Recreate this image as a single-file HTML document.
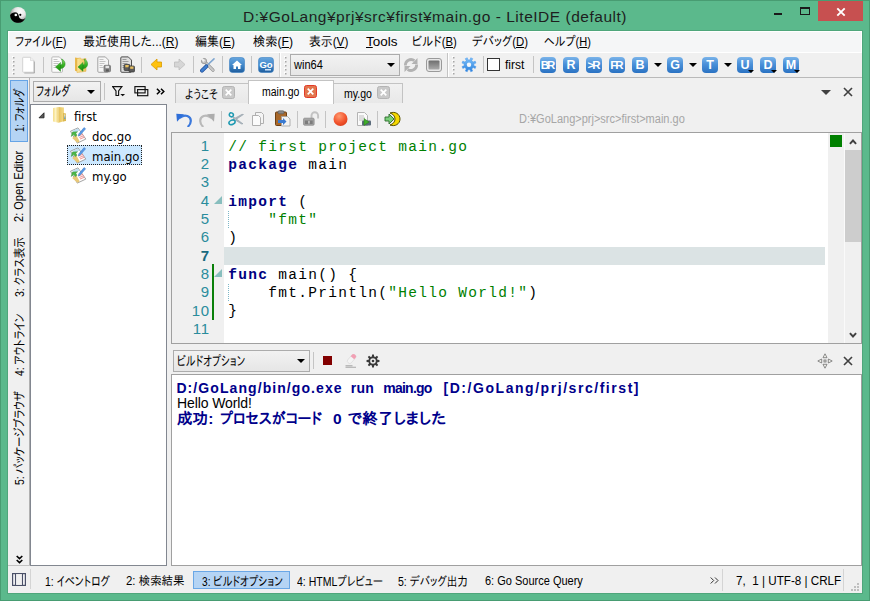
<!DOCTYPE html>
<html lang="ja">
<head>
<meta charset="utf-8">
<title>LiteIDE</title>
<style>
*{box-sizing:border-box;margin:0;padding:0}
html,body{width:870px;height:601px;overflow:hidden;background:#5bb98c}
body{position:relative;font-family:"Liberation Sans","IPAPGothic","IPAGothic","Noto Sans CJK JP",sans-serif;font-size:12px;color:#000}
.a{position:absolute}
.t{position:absolute;white-space:nowrap;line-height:1}
u{text-decoration:underline;text-underline-offset:1px}
#win{left:0;top:0;width:870px;height:601px;background:#5bb98c;border:1px solid #489c72}
#client{left:8px;top:31px;width:854px;height:562px;background:#f0f0f0}
#menubar{left:8px;top:31px;width:854px;height:21px;background:#f5f6f7;border:1px solid #fff;border-bottom:none}
.mi{top:35px;font-size:13px;transform-origin:0 0}
.sep{position:absolute;width:1px;background:#c4c4c4}
.vt{position:absolute;white-space:nowrap;line-height:1;font-size:12px;transform-origin:0 0;transform:rotate(-90deg)}
.combo{position:absolute;border:1px solid #acacac;background:linear-gradient(#f2f2f2,#e6e6e6)}
.box{position:absolute;background:#fff;border:1px solid #828790}
.tab{position:absolute;border:1px solid #c3c3c3;border-bottom:none;background:linear-gradient(#f1f1f1,#e8e8e8)}
.xb{position:absolute;width:13px;height:13px;border-radius:2.500px;background:#c9c9c9;border:1px solid #b4b4b4}
.code{position:absolute;white-space:pre;font-family:"Liberation Mono",monospace;font-size:14.500px;letter-spacing:1.298px;line-height:1;color:#000}
.ln{position:absolute;white-space:pre;font-family:"Liberation Sans",sans-serif;font-size:15px;line-height:1;color:#2a8c9c;text-align:right;width:34px;left:176px;letter-spacing:.8px}
.kw{color:#000080}.cm{color:#008000}.st{color:#008000}
.out{position:absolute;white-space:nowrap;line-height:1;left:176px}
.tr{font-family:'DejaVu Sans','Liberation Sans',sans-serif;font-stretch:condensed;font-size:13px}
.bb{position:absolute;width:18px;height:18px;border-radius:4px;background:linear-gradient(#79b3e9,#4a90d9 45%,#2a72c2);color:#fff;font-weight:bold;font-size:12.500px;text-align:center;line-height:18px;letter-spacing:0}
</style>
</head>
<body>
<div id="win" class="a"></div>
<div class="a" style="left:7px;top:30px;width:856px;height:564px;background:#4fa67b"></div>
<div id="client" class="a"></div>
<div id="menubar" class="a"></div>

<!-- title bar -->
<div class="t" id="title" style="left:243px;top:9px;font-size:15.500px;letter-spacing:.52px;color:#1e1e1e">D:¥GoLang¥prj¥src¥first¥main.go - LiteIDE (default)</div>


<!-- app icon -->
<svg class="a" style="left:9px;top:6px" width="18" height="18" viewBox="0 0 18 18">
<defs><radialGradient id="ig" cx=".62" cy=".3" r=".75"><stop offset="0" stop-color="#fff"/><stop offset=".45" stop-color="#e6e6e6"/><stop offset="1" stop-color="#6a6a6a"/></radialGradient><linearGradient id="ig2" x1="1" y1="0" x2="0" y2="1"><stop offset="0" stop-color="#555"/><stop offset=".5" stop-color="#000"/></linearGradient></defs>
<circle cx="9" cy="9" r="8" fill="url(#ig)"/>
<path d="M1.100 9.500A8 8 0 0 0 16.500 11.800C14 14.300 10.300 13.500 10 10.500C9.800 8 8.300 6 6 6.200C3 6.500 1.300 8 1.100 9.500z" fill="url(#ig2)"/>
<circle cx="6.800" cy="9" r="1.300" fill="#fff"/><circle cx="11.300" cy="8.800" r="1.100" fill="#000"/>
</svg>
<!-- window controls -->
<div class="a" style="left:774px;top:13px;width:8px;height:2px;background:#1a1a1a"></div>
<div class="a" style="left:800px;top:7px;width:10px;height:8px;border:1px solid #1a1a1a;border-top-width:2px"></div>
<div class="a" style="left:818px;top:1px;width:45px;height:20px;background:#c75050"></div>
<svg class="a" style="left:836px;top:6.500px" width="10" height="10" viewBox="0 0 10 10"><path d="M1.300 1.300L8.700 8.700M8.700 1.300L1.300 8.700" stroke="#fff" stroke-width="1.900"/></svg>

<!-- menu -->
<div class="t mi" style="left:15px;transform:scaleX(0.871)">ファイル(<u>F</u>)</div>
<div class="t mi" style="left:83px;transform:scaleX(0.924)">最近使用した...(<u>R</u>)</div>
<div class="t mi" style="left:195px;transform:scaleX(0.922)">編集(<u>E</u>)</div>
<div class="t mi" style="left:252.5px;transform:scaleX(0.939)">検索(<u>F</u>)</div>
<div class="t mi" style="left:309px;transform:scaleX(0.910)">表示(<u>V</u>)</div>
<div class="t mi" style="left:366px;transform:scaleX(1.036)"><u>T</u>ools</div>
<div class="t mi" style="left:412.4px;transform:scaleX(0.870)">ビルド(<u>B</u>)</div>
<div class="t mi" style="left:472px;transform:scaleX(0.874)">デバッグ(<u>D</u>)</div>
<div class="t mi" style="left:543.8px;transform:scaleX(0.850)">ヘルプ(<u>H</u>)</div>
<!-- main toolbar -->
<div class="a" style="left:8px;top:52px;width:854px;height:1px;background:#fff"></div>
<div class="a" style="left:8px;top:77px;width:854px;height:1px;background:#b9b9b9"></div>
<svg class="a" style="left:11.500px;top:56px" width="3" height="20" viewBox="0 0 3 20"><rect x="0" y="0" width="1.500" height="1.500" fill="#fff"/><rect x="1" y="1" width="1.500" height="1.500" fill="#a6a6a6"/><rect x="0" y="4" width="1.500" height="1.500" fill="#fff"/><rect x="1" y="5" width="1.500" height="1.500" fill="#a6a6a6"/><rect x="0" y="8" width="1.500" height="1.500" fill="#fff"/><rect x="1" y="9" width="1.500" height="1.500" fill="#a6a6a6"/><rect x="0" y="12" width="1.500" height="1.500" fill="#fff"/><rect x="1" y="13" width="1.500" height="1.500" fill="#a6a6a6"/><rect x="0" y="16" width="1.500" height="1.500" fill="#fff"/><rect x="1" y="17" width="1.500" height="1.500" fill="#a6a6a6"/></svg>
<svg class="a" width="0" height="0" style="left:0;top:0"><defs><linearGradient id="ga" x1="0" y1="0" x2="0" y2="1"><stop offset="0" stop-color="#8fe070"/><stop offset=".5" stop-color="#35b020"/><stop offset="1" stop-color="#1d8a12"/></linearGradient><linearGradient id="fo" x1="0" y1="0" x2="1" y2="0"><stop offset="0" stop-color="#fbe597"/><stop offset="1" stop-color="#efc35a"/></linearGradient></defs></svg><svg class="a" style="left:20.500px;top:56px" width="17" height="18" viewBox="0 0 17 18"><path d="M3.300 2.200h6.800l3.900 3.900v10.500a.8 .8 0 0 1-.8 .8h-9.900z" fill="#a4a4a4" opacity=".9"/><path d="M2.300 1.300h7.200l3.300 3.300v11a.6 .6 0 0 1-.6 .6h-9.900a.6 .6 0 0 1-.6-.6v-13.700a.6 .6 0 0 1 .6-.6z" fill="#fff" stroke="#cacaca" stroke-width=".8"/><path d="M9.500 1.300v3.300h3.300" fill="#f0f0f0" stroke="#d0d0d0" stroke-width=".6"/></svg>
<div class="sep" style="left:43px;top:57px;height:16px"></div>
<svg class="a" style="left:50px;top:56px" width="17" height="17" viewBox="0 0 17 17"><path d="M2.800 .900h6.500l3.200 3.200v11.200a1 1 0 0 1-1 1h-8.700a1 1 0 0 1-1-1v-13.400a1 1 0 0 1 1-1z" fill="#fcfcfc" stroke="#b4b4b4" stroke-width=".9"/><path d="M3.500 3.500h4M3.500 5.500h6M3.500 7.500h5M3.500 9.500h3M3.500 11.500h4" stroke="#c4c4c4" stroke-width="1"/><path d="M10.500 9C12.500 9 13 6 11.500 3C15 4 16.500 9 13.500 11.500C12.500 12.300 11.500 12.600 10.500 12.600zM10.500 6.500L5.500 11L10.500 15.300z" fill="url(#ga)" stroke="#1f8a18" stroke-width=".5"/></svg>
<svg class="a" style="left:74px;top:56px" width="17" height="17" viewBox="0 0 17 17"><path d="M1 1.500l4.500 .8v14l-4.500-1.500z" fill="#e9b94c"/><path d="M3 2.500l3.500-.6 1 1.300 4.500-.7v12.800l-9 1.300z" fill="url(#fo)" stroke="#e0ae45" stroke-width=".5"/><g transform="translate(-1.500 0)"><path d="M10.500 9C12.500 9 13 6 11.500 3C15 4 16.500 9 13.500 11.500C12.500 12.300 11.500 12.600 10.500 12.600zM10.500 6.500L5.500 11L10.500 15.300z" fill="url(#ga)" stroke="#1f8a18" stroke-width=".5"/></g></svg>
<svg class="a" style="left:96px;top:56px" width="17" height="17" viewBox="0 0 17 17"><path d="M2.800 .900h6.500l3.200 3.200v11.200a1 1 0 0 1-1 1h-8.700a1 1 0 0 1-1-1v-13.400a1 1 0 0 1 1-1z" fill="#f6f6f6" stroke="#9a9a9a" stroke-width=".9"/><path d="M3.500 3.500h4M3.500 5.500h6M3.500 7.500h5M3.500 9.500h3M3.500 11.500h4" stroke="#c4c4c4" stroke-width="1"/><rect x="8" y="9.300" width="6.500" height="6.500" rx="1" fill="#8c8c8c" stroke="#6a6a6a" stroke-width=".7"/><rect x="9.500" y="9.800" width="3.500" height="2.300" fill="#e4e4e4"/><rect x="9.800" y="13.300" width="3" height="2.200" fill="#5a5a5a"/></svg>
<svg class="a" style="left:119px;top:56px" width="17" height="17" viewBox="0 0 17 17"><path d="M2.800 .900h6.500l3.200 3.200v11.200a1 1 0 0 1-1 1h-8.700a1 1 0 0 1-1-1v-13.400a1 1 0 0 1 1-1z" fill="#dedede" stroke="#3c3c3c" stroke-width=".9"/><path d="M3.500 3.500h4M3.500 5.500h6M3.500 7.500h5M3.500 9.500h3M3.500 11.500h4" stroke="#9a9a9a" stroke-width="1"/><rect x="5" y="8.500" width="6" height="6" rx="1" fill="#5a5a5a" stroke="#333" stroke-width=".7"/><rect x="6.300" y="9" width="3.400" height="2.300" fill="#e8c060"/><rect x="10" y="10" width="5.500" height="6" rx="1" fill="#5a5a5a" stroke="#333" stroke-width=".7"/><rect x="11.200" y="10.500" width="3.200" height="2.300" fill="#e8c060"/></svg>
<div class="sep" style="left:141px;top:57px;height:16px"></div>
<svg class="a" style="left:150px;top:58px" width="13" height="13" viewBox="0 0 13 13"><path d="M7 1v3h4.500v5h-4.500v3l-6-5.500z" fill="#ffc20e" stroke="#d89a00" stroke-width=".8"/></svg>
<svg class="a" style="left:173px;top:58px" width="13" height="13" viewBox="0 0 13 13"><path d="M6 1v3h-4.500v5h4.500v3l6-5.500z" fill="#d6d6d6" stroke="#bdbdbd" stroke-width=".8"/></svg>
<div class="sep" style="left:193px;top:56px;height:17px"></div>
<svg class="a" style="left:200px;top:57px" width="16" height="16" viewBox="0 0 16 16"><path d="M5 5L13 13.200" stroke="#8e8e8e" stroke-width="3.200" stroke-linecap="round"/><path d="M5 5L13 13.200" stroke="#c9c9c9" stroke-width="2" stroke-linecap="round"/><circle cx="4" cy="4" r="2.700" fill="#c4c4c4" stroke="#8e8e8e" stroke-width=".7"/><path d="M1 1l3.300 3.300" stroke="#f0f0f0" stroke-width="2"/><path d="M7 8.500L14 1.800" stroke="#7fa6d0" stroke-width="1.600" stroke-linecap="round"/><path d="M2 13.700L6.300 9.300" stroke="#1f4f9a" stroke-width="3.800" stroke-linecap="round"/><path d="M2 13.700L6.300 9.300" stroke="#3f7fd0" stroke-width="2.400" stroke-linecap="round"/></svg>
<div class="sep" style="left:222px;top:56px;height:17px"></div>
<svg class="a" style="left:229px;top:57px" width="16" height="16" viewBox="0 0 16 16"><defs><linearGradient id="bg1" x1="0" y1="0" x2="0" y2="1"><stop offset="0" stop-color="#66a5de"/><stop offset=".55" stop-color="#3f86c9"/><stop offset="1" stop-color="#1d5c9c"/></linearGradient></defs><rect x=".5" y=".5" width="15" height="15" rx="3" fill="url(#bg1)" stroke="#3b7fc2" stroke-width=".6"/><path d="M8 3.500l-5 4.500h1.500v4h2.500v-2.500h2v2.500h2.500v-4h1.500z" fill="#fff"/></svg>
<div class="sep" style="left:251px;top:56px;height:17px"></div>
<svg class="a" style="left:258px;top:57px" width="16" height="16" viewBox="0 0 16 16"><rect x=".5" y=".5" width="15" height="15" rx="3" fill="url(#bg1)" stroke="#3b7fc2" stroke-width=".6"/><text x="8" y="10.500" font-family="Liberation Sans,sans-serif" font-weight="bold" font-size="9.500" fill="#fff" text-anchor="middle">Go</text><rect x="7" y="12" width="6" height="1.500" fill="#cfe2f7"/></svg>
<div class="a" style="left:279px;top:53px;width:2px;height:24px;background:linear-gradient(90deg,#d2d2d2 50%,#fff 50%)"></div>
<svg class="a" style="left:284px;top:56px" width="3" height="20" viewBox="0 0 3 20"><rect x="0" y="0" width="1.500" height="1.500" fill="#fff"/><rect x="1" y="1" width="1.500" height="1.500" fill="#a6a6a6"/><rect x="0" y="4" width="1.500" height="1.500" fill="#fff"/><rect x="1" y="5" width="1.500" height="1.500" fill="#a6a6a6"/><rect x="0" y="8" width="1.500" height="1.500" fill="#fff"/><rect x="1" y="9" width="1.500" height="1.500" fill="#a6a6a6"/><rect x="0" y="12" width="1.500" height="1.500" fill="#fff"/><rect x="1" y="13" width="1.500" height="1.500" fill="#a6a6a6"/><rect x="0" y="16" width="1.500" height="1.500" fill="#fff"/><rect x="1" y="17" width="1.500" height="1.500" fill="#a6a6a6"/></svg>
<div class="combo" style="left:290px;top:54px;width:110px;height:22px"></div>
<div class="t" style="transform:scaleX(.92);transform-origin:0 0;left:294px;top:59px;font-size:12px">win64</div>
<div class="a" style="left:387px;top:63px;border:4px solid transparent;border-top:4px solid #000;border-bottom:none"></div>
<svg class="a" style="left:403px;top:57px" width="16" height="16" viewBox="0 0 16 16"><g fill="none" stroke="#b2b2b2" stroke-width="2.800"><path d="M2.400 8.500a5.600 5.600 0 0 1 9-4.800"/><path d="M13.600 7.500a5.600 5.600 0 0 1-9 4.800"/></g><path d="M14.500 1v6h-6zM1.500 15v-6h6z" fill="#b2b2b2"/></svg>
<svg class="a" style="left:426px;top:57px" width="16" height="16" viewBox="0 0 16 16"><defs><linearGradient id="gg" x1="0" y1="0" x2="0" y2="1"><stop offset="0" stop-color="#6e6e6e"/><stop offset="1" stop-color="#aaaaaa"/></linearGradient></defs><rect x=".5" y="1.500" width="15" height="13" rx="2.500" fill="#e8e8e8" stroke="#9a9a9a"/><rect x="2.500" y="3.500" width="11" height="9" rx="1" fill="url(#gg)"/></svg>
<div class="a" style="left:447px;top:53px;width:2px;height:24px;background:linear-gradient(90deg,#c4c4c4 50%,#fff 50%)"></div>
<svg class="a" style="left:452px;top:56px" width="3" height="20" viewBox="0 0 3 20"><rect x="0" y="0" width="1.500" height="1.500" fill="#fff"/><rect x="1" y="1" width="1.500" height="1.500" fill="#a6a6a6"/><rect x="0" y="4" width="1.500" height="1.500" fill="#fff"/><rect x="1" y="5" width="1.500" height="1.500" fill="#a6a6a6"/><rect x="0" y="8" width="1.500" height="1.500" fill="#fff"/><rect x="1" y="9" width="1.500" height="1.500" fill="#a6a6a6"/><rect x="0" y="12" width="1.500" height="1.500" fill="#fff"/><rect x="1" y="13" width="1.500" height="1.500" fill="#a6a6a6"/><rect x="0" y="16" width="1.500" height="1.500" fill="#fff"/><rect x="1" y="17" width="1.500" height="1.500" fill="#a6a6a6"/></svg>
<svg class="a" style="left:461px;top:57px" width="16" height="16" viewBox="0 0 16 16"><defs><linearGradient id="gr" x1="0" y1="0" x2="0" y2="1"><stop offset="0" stop-color="#7cc0fa"/><stop offset="1" stop-color="#2b80dc"/></linearGradient></defs><path d="M14.99 9.53L14.17 11.52L12.17 10.56L10.76 11.97L11.72 13.97L9.73 14.79L8.99 12.70L7.01 12.70L6.27 14.79L4.28 13.97L5.24 11.97L3.83 10.56L1.83 11.52L1.01 9.53L3.10 8.79L3.10 6.81L1.01 6.07L1.83 4.08L3.83 5.04L5.24 3.63L4.28 1.63L6.27 0.81L7.01 2.90L8.99 2.90L9.73 0.81L11.72 1.63L10.76 3.63L12.17 5.04L14.17 4.08L14.99 6.07L12.90 6.81L12.90 8.79z" fill="url(#gr)" stroke="#4a98ea" stroke-width=".5" stroke-linejoin="round"/><circle cx="8" cy="7.800" r="2.200" fill="#f4f8fc"/></svg>
<div class="sep" style="left:483px;top:56px;height:17px"></div>
<div class="a" style="left:487px;top:58px;width:13px;height:13px;background:#fff;border:1px solid #333"></div>
<div class="t" style="left:505px;top:59px;font-size:12px">first</div>
<div class="sep" style="left:533px;top:56px;height:17px"></div>
<div class="bb" style="left:540px;top:57px;width:16px;height:16px;line-height:16px;letter-spacing:-2px;font-size:11.500px;text-indent:-2px">BR</div>
<div class="bb" style="left:563px;top:57px;width:16px;height:16px;line-height:16px;letter-spacing:0">R</div>
<div class="bb" style="left:586px;top:57px;width:16px;height:16px;line-height:16px;letter-spacing:-2px;font-size:11.500px;text-indent:-2px">&gt;R</div>
<div class="bb" style="left:609px;top:57px;width:16px;height:16px;line-height:16px;letter-spacing:-2px;font-size:11.500px;text-indent:-2px">FR</div>
<div class="bb" style="left:632px;top:57px;width:16px;height:16px;line-height:16px;letter-spacing:0">B</div>
<div class="a" style="left:654px;top:63px;border:4px solid transparent;border-top:4px solid #000;border-bottom:none"></div>
<div class="bb" style="left:667px;top:57px;width:16px;height:16px;line-height:16px;letter-spacing:0">G</div>
<div class="a" style="left:689px;top:63px;border:4px solid transparent;border-top:4px solid #000;border-bottom:none"></div>
<div class="bb" style="left:702px;top:57px;width:16px;height:16px;line-height:16px;letter-spacing:0">T</div>
<div class="a" style="left:724px;top:63px;border:4px solid transparent;border-top:4px solid #000;border-bottom:none"></div>
<div class="bb" style="left:737px;top:57px;width:16px;height:16px;line-height:16px;letter-spacing:0">U</div>
<div class="a" style="left:748px;top:70px;border:3px solid transparent;border-top:3px solid #000;border-bottom:none"></div>
<div class="bb" style="left:760px;top:57px;width:16px;height:16px;line-height:16px;letter-spacing:0">D</div>
<div class="a" style="left:771px;top:70px;border:3px solid transparent;border-top:3px solid #000;border-bottom:none"></div>
<div class="bb" style="left:783px;top:57px;width:16px;height:16px;line-height:16px;letter-spacing:0">M</div>
<div class="a" style="left:794px;top:70px;border:3px solid transparent;border-top:3px solid #000;border-bottom:none"></div>
<!-- left side bar -->
<div class="a" style="left:10px;top:80px;width:18px;height:62px;background:#b5d4f4;border:1px solid #66a4e6"></div>
<div class="a" style="left:29px;top:78px;width:1px;height:488px;background:#b0b0b0"></div>
<div class="vt" id="v1" style="font-size:13px;left:12.500px;top:132px;transform:rotate(-90deg) scaleX(0.738)">1: フォルダ</div>
<div class="vt" id="v2" style="left:13px;top:222px;transform:rotate(-90deg) scaleX(0.92)">2: Open Editor</div>
<div class="vt" id="v3" style="font-size:13px;left:12.500px;top:297px;transform:rotate(-90deg) scaleX(0.812)">3: クラス表示</div>
<div class="vt" id="v4" style="font-size:13px;left:12.500px;top:376px;transform:rotate(-90deg) scaleX(0.803)">4: アウトライン</div>
<div class="vt" id="v5" style="font-size:13px;left:12.500px;top:485px;transform:rotate(-90deg) scaleX(0.799)">5: パッケージブラウザ</div>
<svg class="a" style="left:16px;top:554.500px" width="7" height="9" viewBox="0 0 7 9"><path d="M.7 1l2.800 2.600 2.800-2.600M.7 5l2.800 2.600 2.800-2.600" fill="none" stroke="#000" stroke-width="1.600"/></svg>
<div class="a" style="left:8px;top:565px;width:22px;height:1px;background:#c2c2c2"></div>
<!-- folder panel -->
<div class="combo" style="left:33px;top:81px;width:68px;height:21px"></div>
<div class="t" id="fcombo" style="transform:scaleX(0.720);transform-origin:0 0;left:36px;top:84px;font-size:14px">フォルダ</div>
<div class="a" style="left:87px;top:90px;border:4px solid transparent;border-top:4px solid #000;border-bottom:none"></div>
<div class="sep" style="left:104px;top:83px;height:17px"></div>
<svg class="a" style="left:112px;top:86px" width="14" height="11" viewBox="0 0 14 11"><path d="M.6 .6h9.300l-3.300 4.400v4.500h-2.600v-4.500z" fill="none" stroke="#111" stroke-width="1.150"/><path d="M8.300 7.900h4.800l-2.400 2.300z" fill="#111"/></svg>
<svg class="a" style="left:134px;top:86px" width="15" height="11" viewBox="0 0 15 11"><rect x=".9" y=".6" width="10.200" height="6.300" fill="none" stroke="#111" stroke-width="1.150"/><rect x="3.600" y="3.600" width="10.200" height="6.100" fill="none" stroke="#111" stroke-width="1.150"/></svg>
<svg class="a" style="left:155.500px;top:88px" width="9" height="7" viewBox="0 0 9 7"><path d="M.9 .8l2.800 2.700-2.800 2.700M5 .8l2.800 2.700-2.800 2.700" fill="none" stroke="#000" stroke-width="1.500"/></svg>
<div class="box" style="left:30px;top:104px;width:137px;height:462px"></div>
<svg class="a" style="left:38px;top:112px" width="7" height="7" viewBox="0 0 7 7"><path d="M6 .8v5h-5z" fill="#595959" stroke="#262626" stroke-width=".9"/></svg>
<svg class="a" style="left:53px;top:107px" width="14" height="16" viewBox="0 0 14 16"><defs><linearGradient id="fg" x1="0" y1="0" x2="1" y2="0"><stop offset="0" stop-color="#f3d97e"/><stop offset=".45" stop-color="#fdf3c4"/><stop offset="1" stop-color="#f0d274"/></linearGradient><linearGradient id="fg2" x1="0" y1="0" x2="1" y2="0"><stop offset="0" stop-color="#e6c25c"/><stop offset="1" stop-color="#f4dc8a"/></linearGradient><linearGradient id="fg3" x1="0" y1="0" x2="0" y2="1"><stop offset="0" stop-color="#fff"/><stop offset="1" stop-color="#2f8fe0"/></linearGradient></defs><path d="M.1 1l5.400-.9v15.600l-5.400-1.200z" fill="url(#fg)"/><path d="M5.500 .1l5.500 .4v13.700l-5.500 1.500z" fill="url(#fg2)"/><path d="M10 6l3 .5v7.500l-3 .6z" fill="#dcb851"/><rect x="11.300" y="7.500" width="1" height="4.500" fill="url(#fg3)"/></svg>
<svg class="a" style="left:70px;top:126.5px" width="17" height="17" viewBox="0 0 17 17"><path d="M.5 4.200l7.500-3.300 7.800 11.200-8.500 4z" fill="#fdfdfd" stroke="#8e8e8e" stroke-width=".8"/><path d="M2.500 3.800l5.500-2.300 1.500 2-5.800 2.500z" fill="#bfe0f5"/><path d="M8.500 9l4.500-1.800M9.300 10.500l4.500-1.800M10 12l4.500-1.800" stroke="#f08a8a" stroke-width=".9"/><path d="M2.200 11l4-3 3.500 6.500-2.400 1.200z" fill="#e8c878"/><path d="M1.200 9.500l1.200-4.500 5.200-.3-1.800 1.600 1.200 2-2 1.300-1.200-2z" fill="#4cb648" stroke="#2f8f2f" stroke-width=".4"/><path d="M14 .6l1.600 1.200-5.500 6.400-1.800.8 .4-1.900z" fill="#5a9be6" stroke="#3a78c8" stroke-width=".5"/></svg>
<div class="a" style="left:67px;top:145px;width:75px;height:20px;background:#cce8ff;border:1px dotted #222"></div>
<svg class="a" style="left:70px;top:146.5px" width="17" height="17" viewBox="0 0 17 17"><path d="M.5 4.200l7.500-3.300 7.800 11.200-8.500 4z" fill="#fdfdfd" stroke="#8e8e8e" stroke-width=".8"/><path d="M2.500 3.800l5.500-2.300 1.500 2-5.800 2.500z" fill="#bfe0f5"/><path d="M8.500 9l4.500-1.800M9.300 10.500l4.500-1.800M10 12l4.500-1.800" stroke="#f08a8a" stroke-width=".9"/><path d="M2.200 11l4-3 3.500 6.500-2.400 1.200z" fill="#e8c878"/><path d="M1.200 9.500l1.200-4.500 5.200-.3-1.800 1.600 1.200 2-2 1.300-1.200-2z" fill="#4cb648" stroke="#2f8f2f" stroke-width=".4"/><path d="M14 .6l1.600 1.200-5.500 6.400-1.800.8 .4-1.900z" fill="#5a9be6" stroke="#3a78c8" stroke-width=".5"/></svg>
<svg class="a" style="left:70px;top:166.5px" width="17" height="17" viewBox="0 0 17 17"><path d="M.5 4.200l7.500-3.300 7.800 11.200-8.500 4z" fill="#fdfdfd" stroke="#8e8e8e" stroke-width=".8"/><path d="M2.500 3.800l5.500-2.300 1.500 2-5.800 2.500z" fill="#bfe0f5"/><path d="M8.500 9l4.500-1.800M9.300 10.500l4.500-1.800M10 12l4.500-1.800" stroke="#f08a8a" stroke-width=".9"/><path d="M2.200 11l4-3 3.500 6.500-2.400 1.200z" fill="#e8c878"/><path d="M1.200 9.500l1.200-4.500 5.200-.3-1.800 1.600 1.200 2-2 1.300-1.200-2z" fill="#4cb648" stroke="#2f8f2f" stroke-width=".4"/><path d="M14 .6l1.600 1.200-5.500 6.400-1.800.8 .4-1.900z" fill="#5a9be6" stroke="#3a78c8" stroke-width=".5"/></svg>
<div class="t tr" style="left:74px;top:109.500px;">first</div>
<div class="t tr" style="left:92px;top:129.500px;">doc.go</div>
<div class="t tr" style="left:92px;top:149.500px;">main.go</div>
<div class="t tr" style="left:92px;top:169.500px;">my.go</div>
<!-- editor tabs -->

<div class="tab" style="left:175px;top:83px;width:74px;height:20px"></div>
<div class="tab" style="left:333px;top:83px;width:70px;height:20px"></div>
<div class="tab" style="left:248px;top:80px;width:86px;height:24px;background:#fff"></div>
<div class="t tb" style="transform:scaleX(0.778);transform-origin:0 0;left:185px;top:87.5px;font-size:13px">ようこそ</div>
<div class="t tb" style="transform:scaleX(0.875);transform-origin:0 0;left:262px;top:86px;font-size:12px">main.go</div>
<div class="t tb" style="transform:scaleX(0.880);transform-origin:0 0;left:344px;top:88px;font-size:12px">my.go</div>
<div class="xb" style="left:222px;top:86px;background:#c9c9c9"></div><svg class="a" style="left:225px;top:89px" width="7" height="7" viewBox="0 0 7 7"><path d="M.7 .7l5.600 5.600M6.300 .7l-5.600 5.600" stroke="#fff" stroke-width="1.700"/></svg>
<div class="xb" style="left:304px;top:85px;background:#e2764e;border:1px solid #e23a28"></div><svg class="a" style="left:307px;top:88px" width="7" height="7" viewBox="0 0 7 7"><path d="M.7 .7l5.600 5.600M6.300 .7l-5.600 5.600" stroke="#fff" stroke-width="1.700"/></svg>
<div class="xb" style="left:377px;top:86px;background:#c9c9c9"></div><svg class="a" style="left:380px;top:89px" width="7" height="7" viewBox="0 0 7 7"><path d="M.7 .7l5.600 5.600M6.300 .7l-5.600 5.600" stroke="#fff" stroke-width="1.700"/></svg>
<div class="a" style="left:821px;top:90px;border:5px solid transparent;border-top:5px solid #404040;border-bottom:none"></div>
<svg class="a" style="left:843px;top:87px" width="10" height="10" viewBox="0 0 10 10"><path d="M1 1l8 8M9 1l-8 8" stroke="#404040" stroke-width="1.650"/></svg>
<!-- editor toolbar -->
<svg class="a" style="left:176px;top:111.500px" width="17" height="15" viewBox="0 0 17 15"><path d="M4.500 5.500C9 1.500 15 4.500 14.800 9C14.700 11.500 13.800 13 12.300 14.300" fill="none" stroke="#3a78dc" stroke-width="2.200" stroke-linecap="round"/><path d="M.3 1.800L8 2.200L1 9.800z" fill="#2f6fd8"/></svg>
<svg class="a" style="left:198px;top:111.500px" width="17" height="15" viewBox="0 0 17 15"><path d="M12.500 5.500C8 1.500 2 4.500 2.200 9C2.300 11.500 3.200 13 4.700 14.300" fill="none" stroke="#b9b9b9" stroke-width="2.200" stroke-linecap="round"/><path d="M16.700 1.800L9 2.200L16 9.800z" fill="#adadad"/></svg>
<div class="sep" style="left:221px;top:111px;height:17px"></div>
<svg class="a" style="left:228px;top:111px" width="16" height="16" viewBox="0 0 16 16"><path d="M5 5.500L15 12.800l-1.500 .2L5.500 8zM6.500 9.500L15.500 3.500l-1.600-.2L5.500 8z" fill="#aeb8c0" stroke="#8896a0" stroke-width=".5"/><ellipse cx="3.300" cy="3.800" rx="2.100" ry="1.900" fill="none" stroke="#1f9ab2" stroke-width="1.500" transform="rotate(30 3.300 3.800)"/><ellipse cx="4" cy="11.300" rx="3.200" ry="2.100" fill="none" stroke="#1f9ab2" stroke-width="1.600" transform="rotate(-25 4 11.300)"/></svg>
<svg class="a" style="left:251px;top:111px" width="16" height="16" viewBox="0 0 16 16"><path d="M4.500 1.500h6l2 2v9h-8z" fill="#f4f4f4" stroke="#b0b0b0"/><path d="M1.500 4.500h6l2 2v8h-8z" fill="#fbfbfb" stroke="#b0b0b0"/></svg>
<svg class="a" style="left:274px;top:110px" width="17" height="17" viewBox="0 0 17 17"><rect x="1.500" y="2" width="11" height="13.500" rx="1" fill="#a8682a" stroke="#6d3f12"/><rect x="4" y=".8" width="6" height="3" rx="1" fill="#888" stroke="#555" stroke-width=".6"/><path d="M7.500 6.500h6l2.500 2.500v7h-8.500z" fill="#f2f2f2" stroke="#a0a0a0" stroke-width=".8"/><path d="M4 10h5v-2l3.500 3.500-3.500 3.500v-2h-5z" fill="#3a7ad0"/></svg>
<div class="sep" style="left:297px;top:111px;height:17px"></div>
<svg class="a" style="left:303px;top:111px" width="17" height="16" viewBox="0 0 17 16"><path d="M8.500 8v-3.500a3.300 3.300 0 0 1 6.600 0v3" fill="none" stroke="#c2c2c2" stroke-width="1.900"/><rect x=".6" y="7.200" width="10.500" height="7" rx="1" fill="#a4a4a4" stroke="#8a8a8a" stroke-width=".8"/><rect x="2" y="9.500" width="7.700" height="3.500" fill="#7c7c7c"/><rect x="5.300" y="9.800" width="1.300" height="2.800" fill="#d8d8d8"/></svg>
<div class="sep" style="left:325px;top:111px;height:17px"></div>
<svg class="a" style="left:333px;top:111px" width="16" height="16" viewBox="0 0 16 16"><defs><radialGradient id="rg" cx=".4" cy=".3" r=".8"><stop offset="0" stop-color="#ff9a70"/><stop offset=".6" stop-color="#f2542d"/><stop offset="1" stop-color="#d63a18"/></radialGradient></defs><circle cx="7.500" cy="8" r="7" fill="url(#rg)"/></svg>
<svg class="a" style="left:356px;top:111px" width="16" height="16" viewBox="0 0 16 16"><path d="M1.500 1.500h7l3 3v10h-10z" fill="#fafafa" stroke="#b4b4b4"/><path d="M3 5h5M3 7h6M3 9h4" stroke="#c0c0c0"/><rect x="6" y="9.500" width="9" height="5" rx="1" fill="#5a6a7a"/><path d="M8 7.500l5 3.500-5 3.500z" fill="#3fae2a" stroke="#2a7a1a" stroke-width=".5"/></svg>
<div class="sep" style="left:377px;top:111px;height:17px"></div>
<svg class="a" style="left:384px;top:111px" width="17" height="16" viewBox="0 0 17 16"><path d="M6 2c5-2 10 1 10 6s-5 8-10 6c3-1 5-3 5-6s-2-5-5-6z" fill="#f5d800" stroke="#5a5200" stroke-width="1"/><path d="M1 6h4v-3l5 5-5 5v-3h-4z" fill="#7ad07a" stroke="#2a6a2a" stroke-width=".9"/></svg>
<div class="t" id="path" style="left:519px;top:113px;font-size:12px;color:#a6a6a6;transform:scaleX(.917);transform-origin:0 0">D:¥GoLang&gt;prj&gt;src&gt;first&gt;main.go</div>
<!-- editor -->
<div class="box" style="left:171px;top:132px;width:691px;height:212px;border-color:#a0a0a0"></div>
<div class="a" style="left:172px;top:133px;width:52px;height:210px;background:#f0f0f0"></div>
<div class="a" style="left:224px;top:247px;width:601px;height:18px;background:#dbe3e4"></div>
<div class="a" style="left:828px;top:133px;width:17px;height:210px;background:#f0f0f0"></div>
<div class="a" style="left:830px;top:135px;width:12px;height:12px;background:#008000"></div>
<div class="a" style="left:844px;top:133px;width:1px;height:210px;background:#fafafa"></div>
<div class="a" style="left:845px;top:133px;width:16px;height:210px;background:#f0f0f0"></div>
<div class="a" style="left:845px;top:150px;width:16px;height:92px;background:#cdcdcd"></div>
<svg class="a" style="left:848.700px;top:138px" width="8" height="8" viewBox="0 0 8 8"><path d="M.9 5.800L4 2.500L7.100 5.800" fill="none" stroke="#404040" stroke-width="1.900"/></svg>
<svg class="a" style="left:848.700px;top:331px" width="8" height="8" viewBox="0 0 8 8"><path d="M.9 2.200L4 5.500L7.100 2.200" fill="none" stroke="#404040" stroke-width="1.900"/></svg>
<div class="a" style="left:212px;top:264px;width:2px;height:56px;background:#0a800a"></div>
<svg class="a" style="left:214px;top:196px" width="8" height="8" viewBox="0 0 8 8"><path d="M8 0v8h-8z" fill="#88bebe"/></svg>
<svg class="a" style="left:214px;top:269px" width="8" height="8" viewBox="0 0 8 8"><path d="M8 0v8h-8z" fill="#88bebe"/></svg>
<div class="a" style="left:228px;top:211px;width:1px;height:17px;background-image:repeating-linear-gradient(#7fb8c8 0 1px,transparent 1px 2px)"></div>
<div class="a" style="left:228px;top:284px;width:1px;height:17px;background-image:repeating-linear-gradient(#7fb8c8 0 1px,transparent 1px 2px)"></div>
<div class="ln" style="top:137.8px">1</div><div class="code" style="left:228.200px;top:139.6px"><span class="cm">// first project main.go</span></div>
<div class="ln" style="top:156.1px">2</div><div class="code" style="left:228.200px;top:157.9px"><b class="kw">package</b> main</div>
<div class="ln" style="top:174.4px">3</div>
<div class="ln" style="top:192.7px">4</div><div class="code" style="left:228.200px;top:194.5px"><b class="kw">import</b> (</div>
<div class="ln" style="top:211.0px">5</div><div class="code" style="left:228.200px;top:212.8px">    <span class="st">"fmt"</span></div>
<div class="ln" style="top:229.3px">6</div><div class="code" style="left:228.200px;top:231.1px">)</div>
<div class="ln" style="top:247.6px;color:#1a6a80;font-weight:bold">7</div>
<div class="ln" style="top:265.9px">8</div><div class="code" style="left:228.200px;top:267.7px"><b class="kw">func</b> main() {</div>
<div class="ln" style="top:284.2px">9</div><div class="code" style="left:228.200px;top:286.0px">    fmt.Println(<span class="st">"Hello World!"</span>)</div>
<div class="ln" style="top:302.5px">10</div><div class="code" style="left:228.200px;top:304.3px">}</div>
<div class="ln" style="top:320.8px">11</div>
<!-- bottom panel -->
<div class="combo" style="left:173px;top:350px;width:137px;height:22px"></div>
<div class="t" id="bcombo" style="left:177px;top:354px;font-size:14px;transform:scaleX(0.711);transform-origin:0 0">ビルドオプション</div>
<div class="a" style="left:297px;top:359px;border:4px solid transparent;border-top:4px solid #000;border-bottom:none"></div>
<div class="sep" style="left:313px;top:352px;height:17px"></div>
<div class="a" style="left:323px;top:356px;width:9px;height:9.300px;background:#820000"></div>
<svg class="a" style="left:345px;top:353.500px" width="12" height="15" viewBox="0 0 12 15"><g transform="rotate(40 6.500 5)"><rect x="4.200" y="-.5" width="4.600" height="10.500" rx="2" fill="#f4f4f4" stroke="#d0d0d0" stroke-width=".5"/><path d="M4.200 3.500v-2a2 2 0 0 1 2-2h.6a2 2 0 0 1 2 2v2z" fill="#f2a0b4"/></g><path d="M.5 11.700h7M.5 13.300h10.500" stroke="#a8a8a8" stroke-width="1.100"/></svg>
<svg class="a" style="left:366px;top:354px" width="14" height="14" viewBox="0 0 14 14"><path d="M13.44 6.09L13.44 7.91L11.45 8.15L10.96 9.34L12.19 10.91L10.91 12.19L9.34 10.96L8.15 11.45L7.91 13.44L6.09 13.44L5.85 11.45L4.66 10.96L3.09 12.19L1.81 10.91L3.04 9.34L2.55 8.15L0.56 7.91L0.56 6.09L2.55 5.85L3.04 4.66L1.81 3.09L3.09 1.81L4.66 3.04L5.85 2.55L6.09 0.56L7.91 0.56L8.15 2.55L9.34 3.04L10.91 1.81L12.19 3.09L10.96 4.66L11.45 5.85z" fill="#3a3a3a"/><circle cx="7" cy="7" r="2.800" fill="#f0f0f0"/><circle cx="7" cy="7" r="1.300" fill="#3a3a3a"/></svg>
<svg class="a" style="left:817px;top:353px" width="16" height="16" viewBox="0 0 16 16"><g fill="#f6f6f0" stroke="#6e6e6e" stroke-width=".8"><path d="M8 .8l2 3.900h-4zM8 15.200l2-3.900h-4zM.8 8l3.900-2v4zM15.200 8l-3.900-2v4z"/><rect x="7" y="7" width="2" height="2"/></g></svg>
<svg class="a" style="left:843px;top:356px" width="10" height="10" viewBox="0 0 10 10"><path d="M1 1l8 8M9 1l-8 8" stroke="#404040" stroke-width="1.650"/></svg>
<div class="box" style="left:171px;top:374px;width:691px;height:192px;border-color:#a0a0a0"></div>
<div class="out o1" style="left:176.4px;top:381px;font-size:14px;font-weight:bold;color:#00008b;letter-spacing:1.081px">D:/GoLang/bin/go.exe</div>
<div class="out o1" style="left:350.8px;top:381px;font-size:14px;font-weight:bold;color:#00008b;letter-spacing:0.220px">run</div>
<div class="out o1" style="left:383.2px;top:381px;font-size:14px;font-weight:bold;color:#00008b;letter-spacing:-0.745px">main.go</div>
<div class="out o1" style="left:443.5px;top:381px;font-size:14px;font-weight:bold;color:#00008b;letter-spacing:1.546px">[D:/GoLang/prj/src/first]</div>
<div class="out" id="o2" style="left:177px;top:396px;font-size:14px;letter-spacing:-0.1px">Hello World!</div>
<div class="out o3" style="left:177px;top:411px;font-size:15.500px;font-weight:bold;color:#00008b;letter-spacing:.1px;transform-origin:0 0">成功:</div>
<div class="out o3" style="left:220px;top:411px;font-size:15.500px;font-weight:bold;color:#00008b;letter-spacing:.1px;transform-origin:0 0;transform:scaleX(.915)">プロセスがコード</div>
<div class="out o3" style="left:333px;top:411px;font-size:15.500px;font-weight:bold;color:#00008b;letter-spacing:.1px;transform-origin:0 0">0</div>
<div class="out o3" style="left:348px;top:411px;font-size:15.500px;font-weight:bold;color:#00008b;letter-spacing:.1px;transform-origin:0 0;transform:scaleX(1.0)">で終了しました</div>
<!-- status bar -->
<svg class="a" style="left:12px;top:573px" width="15" height="14" viewBox="0 0 15 14"><rect x=".6" y=".6" width="12.800" height="11.800" fill="#f6f6f8" stroke="#4a5068" stroke-width="1.200"/><rect x="3.600" y="1.200" width="6.800" height="10.600" fill="#f0f0f0"/><path d="M3.500 .5v12M10.500 .5v12" stroke="#4a5068" stroke-width="1.100"/></svg>
<div class="sep" style="left:30px;top:569px;height:20px;background:#d4d4d4"></div>
<div class="a" style="left:193px;top:571px;width:97px;height:18px;background:#b5d4f4;border:1px solid #6aa7e6"></div>
<div class="t sb" style="transform:scaleX(0.808);transform-origin:0 0;left:45px;top:574.5px;font-size:13px">1: イベントログ</div>
<div class="t sb" style="transform:scaleX(0.953);transform-origin:0 0;left:126px;top:575px;font-size:12px">2: 検索結果</div>
<div class="t sb" style="transform:scaleX(0.783);transform-origin:0 0;left:202px;top:574.5px;font-size:13px">3: ビルドオプション</div>
<div class="t sb" style="transform:scaleX(0.810);transform-origin:0 0;left:297px;top:574.5px;font-size:13px">4: HTMLプレビュー</div>
<div class="t sb" style="transform:scaleX(0.808);transform-origin:0 0;left:398px;top:574.5px;font-size:13px">5: デバッグ出力</div>
<div class="t sb" style="transform:scaleX(.917);transform-origin:0 0;left:485px;top:575px;font-size:12px">6: Go Source Query</div>
<svg class="a" style="left:710px;top:577px" width="9" height="7" viewBox="0 0 9 7"><path d="M.7 .5l3 3-3 3M5 .5l3 3-3 3" fill="none" stroke="#333" stroke-width="1"/></svg>
<div class="sep" style="left:722px;top:569px;height:22px;background:#d4d4d4"></div>
<div class="t sb" style="transform:scaleX(0.972);transform-origin:0 0;left:736px;top:575px;font-size:12px;white-space:pre">7,  1 | UTF-8 | CRLF</div>
<div class="sep" style="left:843px;top:569px;height:22px;background:#d4d4d4"></div>
<svg class="a" style="left:850px;top:582px" width="10" height="10" viewBox="0 0 10 10"><g fill="#bfbfbf"><rect x="7" y="1" width="2" height="2"/><rect x="4" y="4" width="2" height="2"/><rect x="7" y="4" width="2" height="2"/><rect x="1" y="7" width="2" height="2"/><rect x="4" y="7" width="2" height="2"/><rect x="7" y="7" width="2" height="2"/></g></svg>
</body>
</html>
